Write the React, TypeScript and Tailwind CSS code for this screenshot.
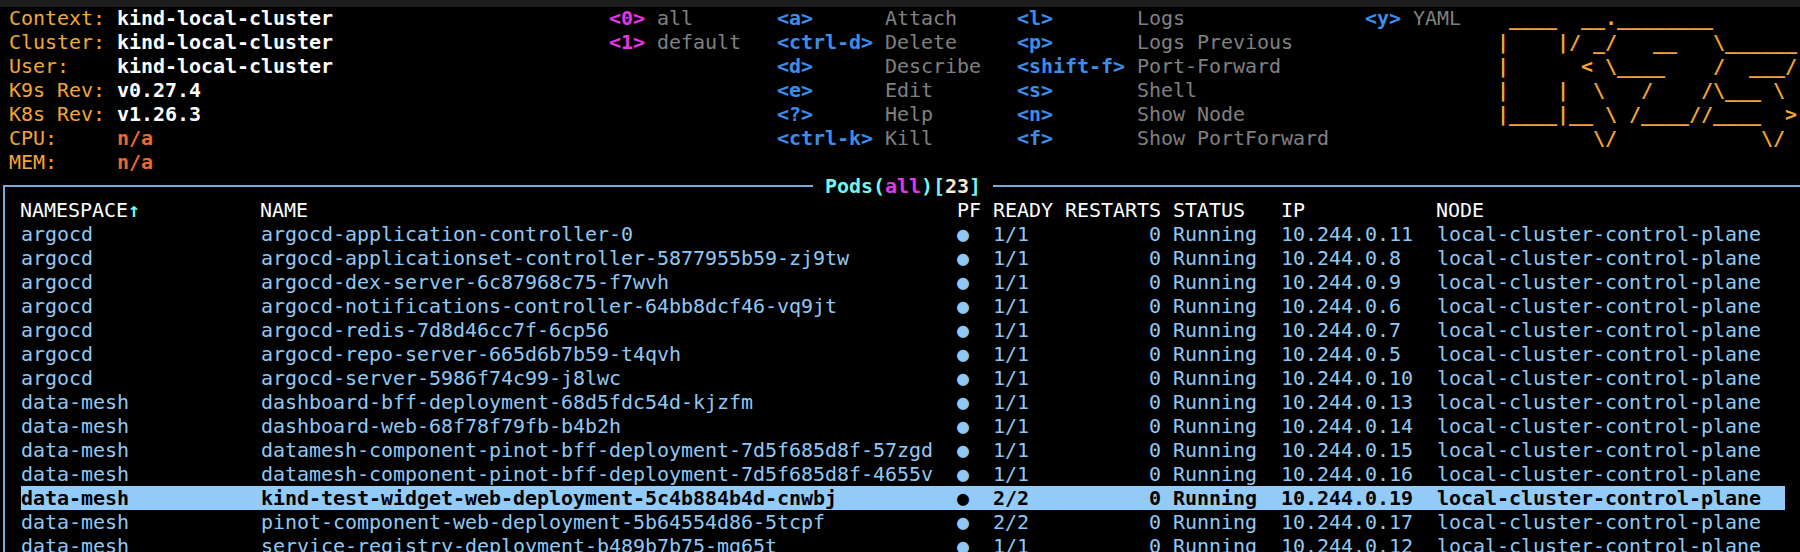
const pods = [
  ["argocd", "argocd-application-controller-0", "1/1", "10.244.0.11"],
  ["argocd", "argocd-applicationset-controller-5877955b59-zj9tw", "1/1", "10.244.0.8"],
  ["argocd", "argocd-dex-server-6c87968c75-f7wvh", "1/1", "10.244.0.9"],
  ["argocd", "argocd-notifications-controller-64bb8dcf46-vq9jt", "1/1", "10.244.0.6"],
  ["argocd", "argocd-redis-7d8d46cc7f-6cp56", "1/1", "10.244.0.7"],
  ["argocd", "argocd-repo-server-665d6b7b59-t4qvh", "1/1", "10.244.0.5"],
  ["argocd", "argocd-server-5986f74c99-j8lwc", "1/1", "10.244.0.10"],
  ["data-mesh", "dashboard-bff-deployment-68d5fdc54d-kjzfm", "1/1", "10.244.0.13"],
  ["data-mesh", "dashboard-web-68f78f79fb-b4b2h", "1/1", "10.244.0.14"],
  ["data-mesh", "datamesh-component-pinot-bff-deployment-7d5f685d8f-57zgd", "1/1", "10.244.0.15"],
  ["data-mesh", "datamesh-component-pinot-bff-deployment-7d5f685d8f-4655v", "1/1", "10.244.0.16"],
  ["data-mesh", "kind-test-widget-web-deployment-5c4b884b4d-cnwbj", "2/2", "10.244.0.19"],
  ["data-mesh", "pinot-component-web-deployment-5b64554d86-5tcpf", "2/2", "10.244.0.17"],
  ["data-mesh", "service-registry-deployment-b489b7b75-mg65t", "1/1", "10.244.0.12"],
];

const info = [
  ["Context:", "kind-local-cluster", "text-white"],
  ["Cluster:", "kind-local-cluster", "text-white"],
  ["User:", "kind-local-cluster", "text-white"],
  ["K9s Rev:", "v0.27.4", "text-white"],
  ["K8s Rev:", "v1.26.3", "text-white"],
  ["CPU:", "n/a", "text-[#ee6630]"],
  ["MEM:", "n/a", "text-[#ee6630]"],
];

const logo = [
  " ____  __.________",
  "|    |/ _/   __   \\______",
  "|      < \\____    /  ___/",
  "|    |  \\   /    /\\___ \\",
  "|____|__ \\ /____//____  >",
  "        \\/            \\/",
];

const hintCols = [
  { w: "w-[240px]", kw: "w-[108px]", rows: [["<a>", "Attach"], ["<ctrl-d>", "Delete"], ["<d>", "Describe"], ["<e>", "Edit"], ["<?>", "Help"], ["<ctrl-k>", "Kill"]] },
  { w: "w-[348px]", kw: "w-[120px]", rows: [["<l>", "Logs"], ["<p>", "Logs Previous"], ["<shift-f>", "Port-Forward"], ["<s>", "Shell"], ["<n>", "Show Node"], ["<f>", "Show PortForward"]] },
  { w: "w-[132px]", kw: "w-[48px]", rows: [["<y>", "YAML"]] },
];

const grid = "grid grid-cols-[240px_696px_36px_72px_108px_108px_156px_324px] w-[1764px] h-[24px] pr-[24px]";

export default function App() {
  return (
    <div className="w-[1800px] h-[552px] overflow-hidden bg-black font-['DejaVu_Sans_Mono',monospace] text-[20px] leading-[24px] tracking-[-0.04px] whitespace-pre">
      <div className="h-[7px] bg-[#1e1e1e]" />
      <header className="flex h-[168px] -mt-px pl-[9px]">
        <div className="w-[600px]">
          {info.map(([k, v, c]) => (
            <div key={k} className="flex h-[24px]">
              <span className="w-[108px] text-[#f3a633]">{k}</span>
              <span className={`font-bold ${c}`}>{v}</span>
            </div>
          ))}
        </div>
        <div className="w-[168px]">
          {[["<0>", "all"], ["<1>", "default"]].map(([k, v]) => (
            <div key={k} className="flex h-[24px]">
              <span className="w-[48px] font-bold text-[#e536e5]">{k}</span>
              <span className="text-[#808080]">{v}</span>
            </div>
          ))}
        </div>
        {hintCols.map((col) => (
          <div key={col.w} className={col.w}>
            {col.rows.map(([k, v]) => (
              <div key={k} className="flex h-[24px]">
                <span className={`${col.kw} font-bold text-[#3b8eea]`}>{k}</span>
                <span className="text-[#808080]">{v}</span>
              </div>
            ))}
          </div>
        ))}
        <div className="font-bold text-[#f3a633]">
          {logo.map((l) => (
            <div key={l} className="h-[24px]">{l}</div>
          ))}
        </div>
      </header>
      <section className="mt-[11px] ml-[3px] w-[1810px] border-l-2 border-t-2 border-[#74acdc] pl-[16px]">
        <div className="-mt-[13px] -ml-[18px] h-[24px] pl-[810px]">
          <span className="inline-block bg-black px-[12px] font-bold">
            <span className="text-[#74f5f0]">Pods(</span>
            <span className="text-[#e536e5]">all</span>
            <span className="text-[#74f5f0]">)[</span>
            <span className="text-[#fbe8cf]">23</span>
            <span className="text-[#74f5f0]">]</span>
          </span>
        </div>
        <div className={`${grid} text-white`}>
          <span className="-ml-px">NAMESPACE<span className="font-bold text-[#74f5f0]">↑</span></span>
          <span className="-ml-px">NAME</span>
          <span>PF</span>
          <span>READY</span>
          <span>RESTARTS</span>
          <span>STATUS</span>
          <span>IP</span>
          <span className="-ml-px">NODE</span>
        </div>
        {pods.map(([ns, name, ready, ip], i) => {
          const sel = i === 11;
          return (
            <div key={name} className={`${grid} ${sel ? "bg-[#93cbf8] text-black font-bold" : "text-[#90c8f5]"}`}>
              <span>{ns}</span>
              <span>{name}</span>
              <span>●</span>
              <span>{ready}</span>
              <span className="text-right pr-[12px]">0</span>
              <span>Running</span>
              <span>{ip}</span>
              <span>local-cluster-control-plane</span>
            </div>
          );
        })}
      </section>
    </div>
  );
}
